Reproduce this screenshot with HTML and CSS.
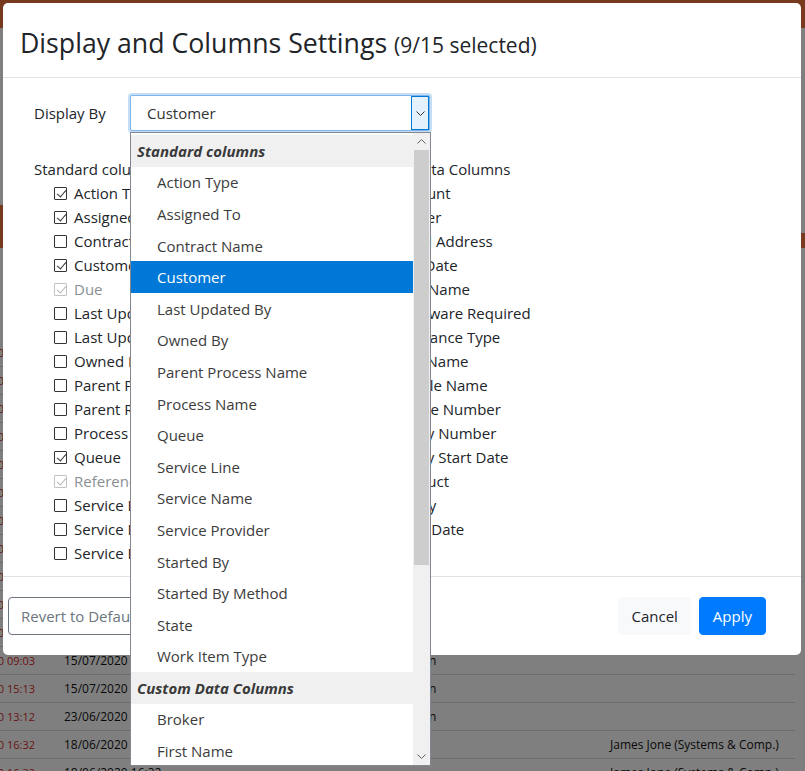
FILE: index.html
```html
<!DOCTYPE html>
<html>
<head>
<meta charset="utf-8">
<title>Display and Columns Settings</title>
<link rel="stylesheet" href="styles.css">
</head>
<body>
<div class="page">
  <div class="navbar"></div>
  <div class="toolbar">
    <div class="tool-left"></div>
    <div class="tool-right"></div>
  </div>
  <div class="grid">
    <div class="row"><div class="c1">10/07/2020 11:02</div><div class="c2">10/07/2020 11:02</div><div class="c3">Admin</div><div class="c4"></div></div>
    <div class="row"><div class="c1">10/07/2020 11:02</div><div class="c2">10/07/2020 11:02</div><div class="c3">Admin</div><div class="c4"></div></div>
    <div class="row"><div class="c1">10/07/2020 11:02</div><div class="c2">10/07/2020 11:02</div><div class="c3">Admin</div><div class="c4"></div></div>
    <div class="row"><div class="c1">10/07/2020 11:02</div><div class="c2">10/07/2020 11:02</div><div class="c3">Admin</div><div class="c4"></div></div>
    <div class="row"><div class="c1">10/07/2020 11:02</div><div class="c2">10/07/2020 11:02</div><div class="c3">Admin</div><div class="c4"></div></div>
    <div class="row"><div class="c1">10/07/2020 11:02</div><div class="c2">10/07/2020 11:02</div><div class="c3">Admin</div><div class="c4"></div></div>
    <div class="row"><div class="c1">10/07/2020 11:02</div><div class="c2">10/07/2020 11:02</div><div class="c3">Admin</div><div class="c4"></div></div>
    <div class="row"><div class="c1">10/07/2020 11:02</div><div class="c2">10/07/2020 11:02</div><div class="c3">Admin</div><div class="c4"></div></div>
    <div class="row"><div class="c1">10/07/2020 11:02</div><div class="c2">10/07/2020 11:02</div><div class="c3">Admin</div><div class="c4"></div></div>
    <div class="row"><div class="c1">10/07/2020 11:02</div><div class="c2">10/07/2020 11:02</div><div class="c3">Admin</div><div class="c4"></div></div>
    <div class="row"><div class="c1">10/07/2020 11:02</div><div class="c2">10/07/2020 11:02</div><div class="c3">Admin</div><div class="c4"></div></div>
    <div class="row"><div class="c1">15/07/2020 09:03</div><div class="c2">15/07/2020 10:03</div><div class="c3">Admin</div><div class="c4"></div></div>
    <div class="row"><div class="c1">14/07/2020 15:13</div><div class="c2">15/07/2020 10:13</div><div class="c3">Admin</div><div class="c4"></div></div>
    <div class="row"><div class="c1">22/06/2020 13:12</div><div class="c2">23/06/2020 10:12</div><div class="c3">Admin</div><div class="c4"></div></div>
    <div class="row"><div class="c1">17/06/2020 16:32</div><div class="c2">18/06/2020 16:32</div><div class="c3"></div><div class="c4">James Jone (Systems &amp; Comp.)</div></div>
    <div class="row"><div class="c1">17/06/2020 16:32</div><div class="c2">18/06/2020 16:32</div><div class="c3"></div><div class="c4">James Jone (Systems &amp; Comp.)</div></div>
  </div>
</div>
<div class="backdrop"></div>

<div class="modal">
  <div class="modal-header">
    <h4 class="modal-title">Display and Columns Settings <small>(9/15 selected)</small></h4>
  </div>
  <div class="modal-body">
    <div class="display-row">
      <label class="display-label">Display By</label>
      <div class="select">
        <span class="select-value">Customer</span>
        <span class="select-btn">
          <svg width="9" height="5" viewBox="0 0 9 5"><path d="M0.5 0.5 L4.5 4.5 L8.5 0.5" fill="none" stroke="#333" stroke-width="1"/></svg>
        </span>
      </div>
    </div>
    <div class="columns">
      <div class="col">
        <div class="col-title">Standard columns</div>
        <div class="opt"><span class="cb checked"></span>Action Type</div>
        <div class="opt"><span class="cb checked"></span>Assigned To</div>
        <div class="opt"><span class="cb"></span>Contract Name</div>
        <div class="opt"><span class="cb checked"></span>Customer</div>
        <div class="opt disabled"><span class="cb checked"></span>Due</div>
        <div class="opt"><span class="cb"></span>Last Updated By</div>
        <div class="opt"><span class="cb"></span>Last Updated Date</div>
        <div class="opt"><span class="cb"></span>Owned By</div>
        <div class="opt"><span class="cb"></span>Parent Process Name</div>
        <div class="opt"><span class="cb"></span>Parent Reference</div>
        <div class="opt"><span class="cb"></span>Process Name</div>
        <div class="opt"><span class="cb checked"></span>Queue</div>
        <div class="opt disabled"><span class="cb checked"></span>Reference</div>
        <div class="opt"><span class="cb"></span>Service Line</div>
        <div class="opt"><span class="cb"></span>Service Name</div>
        <div class="opt"><span class="cb"></span>Service Provider</div>
      </div>
      <div class="col">
        <div class="col-title">Custom Data Columns</div>
        <div class="opt"><span class="cb"></span>Account</div>
        <div class="opt"><span class="cb checked"></span>Broker</div>
        <div class="opt"><span class="cb"></span>Email Address</div>
        <div class="opt"><span class="cb"></span>End Date</div>
        <div class="opt"><span class="cb checked"></span>First Name</div>
        <div class="opt"><span class="cb"></span>Hardware Required</div>
        <div class="opt"><span class="cb"></span>Insurance Type</div>
        <div class="opt"><span class="cb"></span>Last Name</div>
        <div class="opt"><span class="cb"></span>Middle Name</div>
        <div class="opt"><span class="cb"></span>Phone Number</div>
        <div class="opt"><span class="cb checked"></span>Policy Number</div>
        <div class="opt"><span class="cb"></span>Policy Start Date</div>
        <div class="opt"><span class="cb"></span>Product</div>
        <div class="opt"><span class="cb"></span>Salary</div>
        <div class="opt"><span class="cb"></span>Start Date</div>
      </div>
    </div>
  </div>
  <div class="modal-footer">
    <button class="btn btn-outline">Revert to Defaults</button>
    <div class="footer-right">
      <button class="btn btn-light">Cancel</button>
      <button class="btn btn-primary">Apply</button>
    </div>
  </div>
</div>

<div class="dropdown">
  <div class="dd-list">
    <div class="dd-group">Standard columns</div>
    <div class="dd-item">Action Type</div>
    <div class="dd-item">Assigned To</div>
    <div class="dd-item">Contract Name</div>
    <div class="dd-item selected">Customer</div>
    <div class="dd-item">Last Updated By</div>
    <div class="dd-item">Owned By</div>
    <div class="dd-item">Parent Process Name</div>
    <div class="dd-item">Process Name</div>
    <div class="dd-item">Queue</div>
    <div class="dd-item">Service Line</div>
    <div class="dd-item">Service Name</div>
    <div class="dd-item">Service Provider</div>
    <div class="dd-item">Started By</div>
    <div class="dd-item">Started By Method</div>
    <div class="dd-item">State</div>
    <div class="dd-item">Work Item Type</div>
    <div class="dd-group">Custom Data Columns</div>
    <div class="dd-item">Broker</div>
    <div class="dd-item">First Name</div>
    <div class="dd-item">Last Name</div>
  </div>
  <div class="dd-scroll">
    <div class="sb-arrow">
      <svg width="9" height="5" viewBox="0 0 9 5"><path d="M0.5 4.5 L4.5 0.5 L8.5 4.5" fill="none" stroke="#606060" stroke-width="1"/></svg>
    </div>
    <div class="sb-track"><div class="sb-thumb"></div></div>
    <div class="sb-arrow">
      <svg width="9" height="5" viewBox="0 0 9 5"><path d="M0.5 0.5 L4.5 4.5 L8.5 0.5" fill="none" stroke="#606060" stroke-width="1"/></svg>
    </div>
  </div>
</div>
</body>
</html>
```

FILE: styles.css
```css
* { box-sizing: border-box; }

html, body {
  margin: 0;
  padding: 0;
}

body {
  width: 805px;
  height: 771px;
  overflow: hidden;
  position: relative;
  background: #ffffff;
  font-family: "Open Sans", "Noto Sans", sans-serif;
  color: #212529;
}

/* ---------- page behind the modal ---------- */
.page {
  width: 805px;
}

.navbar {
  height: 28px;
  background: #f0743f;
}

.toolbar {
  margin-top: 177px;
  height: 43px;
  display: flex;
  justify-content: space-between;
}

.tool-left {
  width: 220px;
  height: 43px;
  background: #f0743f;
}

.tool-right {
  align-self: flex-end;
  width: 120px;
  height: 15px;
  background: #f0743f;
}

.grid {
  margin-top: 91px;
  font-size: 12px;
  color: #111;
}

.row {
  height: 28px;
  border-bottom: 1px solid #d6d6d6;
  display: flex;
  align-items: center;
  margin-right: 10px;
}

.c1 {
  width: 35px;
  flex: none;
  display: flex;
  justify-content: flex-end;
  overflow: hidden;
  white-space: nowrap;
  font-size: 11px;
  color: #d42a2a;
}

.c2 {
  margin-left: 29px;
  width: 336px;
  flex: none;
  white-space: nowrap;
}

.c3 {
  width: 210px;
  flex: none;
  white-space: nowrap;
}

.c4 {
  white-space: nowrap;
}

.backdrop {
  position: absolute;
  inset: 0;
  background: rgba(0, 0, 0, 0.5);
}

/* ---------- modal ---------- */
.modal {
  position: absolute;
  left: 3px;
  top: 3px;
  width: 798px;
  background: #fff;
  border-radius: 5px;
  display: flex;
  flex-direction: column;
}

.modal-header {
  height: 75px;
  padding: 0 17px;
  border-bottom: 1px solid #dee2e6;
  display: flex;
  align-items: center;
}

.modal-title {
  margin: 4px 0 0;
  font-weight: 400;
  font-size: 26.7px;
  line-height: 31px;
  color: #212529;
  white-space: nowrap;
}

.modal-title small {
  font-size: 21px;
  line-height: 1;
}

.modal-body {
  padding: 17px 31px 11px;
}

.display-row {
  display: flex;
  align-items: center;
  height: 36px;
}

.display-label {
  width: 96px;
  font-size: 15px;
}

.select {
  width: 300px;
  height: 36px;
  border: 1px solid #7fb5ea;
  box-shadow: 0 0 0 2px #c6def5;
  border-radius: 2px;
  display: flex;
  align-items: stretch;
  background: #fff;
}

.select-value {
  flex: 1;
  padding-left: 16px;
  display: flex;
  align-items: center;
  font-size: 15px;
  color: #333;
}

.select-btn {
  width: 18px;
  background: #e5f1fb;
  border: 1px solid #0078d7;
  display: flex;
  align-items: center;
  justify-content: center;
}

.columns {
  margin-top: 26px;
  display: grid;
  grid-template-columns: 320px 1fr;
}

.col-title {
  height: 24px;
  line-height: 24px;
  font-size: 15px;
}

.opt {
  height: 24px;
  display: flex;
  align-items: center;
  padding-left: 20px;
  font-size: 15px;
  white-space: nowrap;
}

.opt.disabled {
  color: #8a8f94;
}

.cb {
  position: relative;
  width: 13px;
  height: 13px;
  border: 1px solid #333;
  border-radius: 1px;
  margin-right: 7px;
  flex: none;
  background: #fff;
}

.cb.checked::after {
  content: "";
  position: absolute;
  left: 3.5px;
  top: 0.5px;
  width: 4px;
  height: 8px;
  border: solid #333;
  border-width: 0 1.3px 1.3px 0;
  transform: rotate(40deg);
}

.opt.disabled .cb {
  border-color: #c2c2c2;
}

.opt.disabled .cb.checked::after {
  border-color: #b5b5b5;
}

.modal-footer {
  border-top: 1px solid #dee2e6;
  padding: 20px 35px 20px 5px;
  display: flex;
  justify-content: space-between;
  align-items: center;
}

.footer-right {
  display: flex;
  gap: 8px;
}

.btn {
  font-family: inherit;
  font-size: 15px;
  height: 38px;
  padding: 0 12px;
  border-radius: 4px;
  border: 1px solid transparent;
  background: none;
  cursor: pointer;
}

.btn-outline {
  border-color: #6c757d;
  color: #6c757d;
}

.btn-light {
  background: #f8f9fa;
  border-color: #f8f9fa;
  color: #212529;
}

.btn-primary {
  padding: 0 13px;
  background: #007bff;
  border-color: #007bff;
  color: #fff;
}

/* ---------- open native dropdown ---------- */
.dropdown {
  position: absolute;
  left: 130px;
  top: 132px;
  width: 301px;
  height: 634px;
  border: 1px solid #828790;
  background: #fff;
  display: flex;
}

.dd-list {
  flex: 1;
  overflow: hidden;
  padding-top: 2px;
  font-size: 15px;
}

.dd-group {
  height: 31.6px;
  display: flex;
  align-items: center;
  padding-left: 6px;
  background: #f0f0f0;
  font-weight: 700;
  font-style: italic;
  color: #3a3a3a;
}

.dd-item {
  height: 31.6px;
  display: flex;
  align-items: center;
  padding-left: 26px;
  color: #3c3c3c;
}

.dd-item.selected {
  background: #0078d7;
  color: #fff;
}

.dd-scroll {
  width: 17px;
  background: #f0f0f0;
  display: flex;
  flex-direction: column;
}

.sb-arrow {
  height: 17px;
  display: flex;
  align-items: center;
  justify-content: center;
}

.sb-track {
  flex: 1;
  padding: 0 1px;
}

.sb-thumb {
  height: 415px;
  background: #cdcdcd;
}
```
